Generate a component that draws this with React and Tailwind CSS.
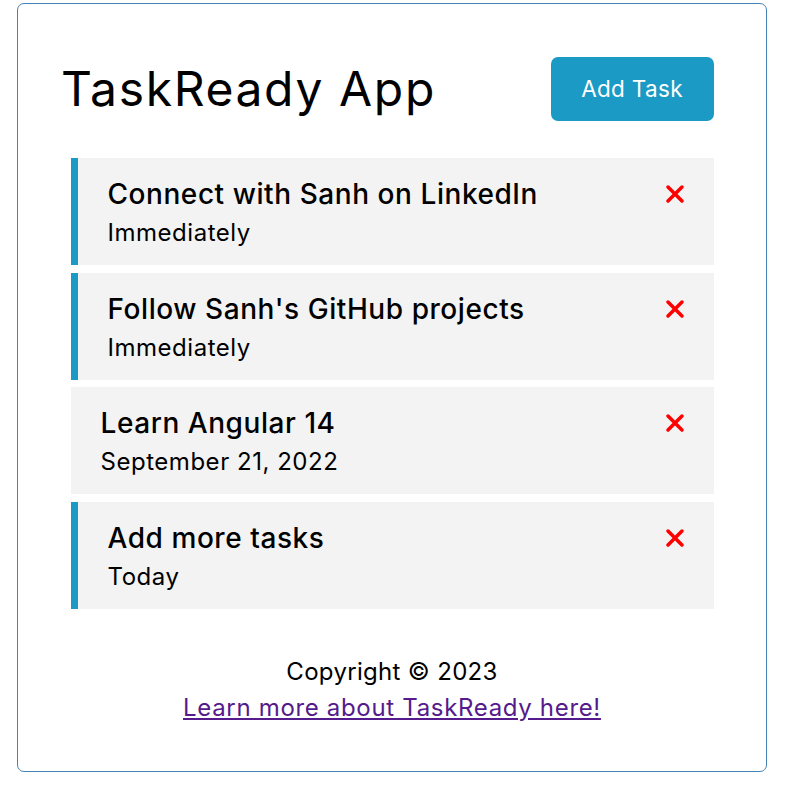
import { FaXmark } from "react-icons/fa6";

const tasks = [
  { id: 1, text: "Connect with Sanh on LinkedIn", day: "Immediately", reminder: true },
  { id: 2, text: "Follow Sanh's GitHub projects", day: "Immediately", reminder: true },
  { id: 3, text: "Learn Angular 14", day: "September 21, 2022", reminder: false },
  { id: 4, text: "Add more tasks", day: "Today", reminder: true },
];

const TaskItem = ({ task }) => (
  <div
    className={`bg-[#f3f3f3] px-[30px] pt-[15px] pb-[14px] ${
      task.reminder ? "border-l-[7.5px] border-[#1b9ac5]" : ""
    }`}
  >
    <h3 className="flex items-center justify-between text-[28px] leading-[42px] font-medium tracking-[0.02em]">
      {task.text}
      <FaXmark className="text-[#ff0000] text-[28px] -mr-[5px] cursor-pointer" />
    </h3>
    <p className="text-[24px] leading-[36px] tracking-[0.022em]">{task.day}</p>
  </div>
);

export default function App() {
  return (
    <div className="min-h-screen bg-white text-black tracking-[0.02em]" style={{ fontFamily: "Inter, 'DejaVu Sans', sans-serif" }}>
      <div className="ml-[17px] mt-[3px] w-[750px] border border-[#4682b4] rounded-[7px] p-[45px]">
        {/* Header */}
        <header className="flex items-center justify-between mb-[30px]">
          <h1 className="text-[48px] leading-[60px] font-normal tracking-[0.034em] -ml-[2px]">TaskReady App</h1>
          <button className="m-[7.5px] w-[163px] h-[64px] rounded-[7px] bg-[#1b9ac5] text-white text-[22.5px] cursor-pointer">
            Add Task
          </button>
        </header>

        {/* Tasks */}
        <div className="flex flex-col gap-[7.5px] mx-[7.5px]">
          {tasks.map((t) => (
            <TaskItem key={t.id} task={t} />
          ))}
        </div>

        {/* Footer */}
        <footer className="mt-[45px] text-center text-[24px] leading-[36px]">
          <p>Copyright &copy; 2023</p>
          <a href="#" className="text-[#551a8b] underline tracking-[0.028em]">
            Learn more about TaskReady here!
          </a>
        </footer>
      </div>
    </div>
  );
}
